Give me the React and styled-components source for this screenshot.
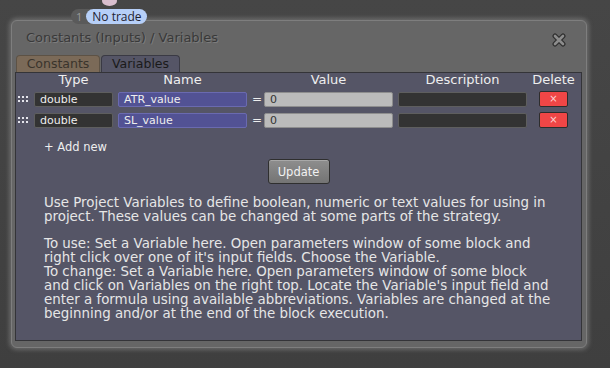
import React from "react";
import styled, { createGlobalStyle } from "styled-components";

const Global = createGlobalStyle`
  html, body { margin: 0; padding: 0; }
  body {
    background: #414141;
    font-family: "DejaVu Sans", "Open Sans", sans-serif;
    width: 610px; height: 368px; overflow: hidden;
  }
`;

const Page = styled.div`
  width: 610px;
  height: 368px;
  background: linear-gradient(#464646, #3f3f3f);
`;

const TopBar = styled.div`
  height: 20px;
  padding-left: 71px;
  padding-top: 6px;
  box-sizing: border-box;
`;

const Badge = styled.div`
  position: relative;
  display: inline-flex;
  align-items: center;
  height: 15px;
`;

const Num = styled.span`
  background: #5a5a5a;
  color: #9a9a9a;
  font-family: "Open Sans", sans-serif;
  font-size: 11px;
  line-height: 15px;
  padding: 0 9px 0 5px;
  border-radius: 8px 0 0 8px;
`;

const Pill = styled.span`
  margin-left: -5px;
  background: #b6cff8;
  color: #1e2230;
  font-family: "Open Sans", sans-serif;
  font-size: 12px;
  line-height: 15px;
  padding: 0 5px 0 6px;
  border-radius: 8px;
`;

const Dot = styled.span`
  position: absolute;
  left: 31px;
  top: -13px;
  width: 15px;
  height: 10px;
  border-radius: 50%;
  background: #d9bfcf;
`;

const Dialog = styled.div`
  margin-left: 11px;
  width: 576px;
  height: 328px;
  box-sizing: border-box;
  background: #666666;
  border: 1px solid #7e7e7e;
  border-radius: 6px;
  box-shadow: 0 0 4px 2px rgba(150, 150, 150, 0.45);
  padding: 0 4px 6px 3px;
  display: flex;
  flex-direction: column;
`;

const TitleBar = styled.div`
  height: 34px;
  display: flex;
  align-items: center;
  justify-content: space-between;
  padding: 0 16px 0 11px;
`;

const Title = styled.div`
  font-size: 13px;
  color: #393939;
  text-shadow: 1px 1px 0 rgba(140, 140, 140, 0.6);
  margin-top: -2px;
`;

const Close = styled.button`
  border: 0;
  background: none;
  padding: 0;
  width: 14px;
  height: 14px;
  display: flex;
  margin-top: 4px;
`;

const Tabs = styled.div`
  display: flex;
  height: 17px;
  padding-left: 1px;
  gap: 1px;
`;

const Tab = styled.div`
  height: 17px;
  box-sizing: border-box;
  width: ${(p) => p.$w}px;
  border-radius: 4px 4px 0 0;
  border: 1px solid ${(p) => (p.$active ? "#3a3a44" : "#5d5245")};
  border-bottom: 0;
  background: ${(p) => (p.$active ? "#555566" : "#7b6a58")};
  color: ${(p) => (p.$active ? "#1a1a1a" : "#3a342c")};
  font-size: 12.5px;
  line-height: 16px;
  text-align: center;
`;

const Panel = styled.div`
  flex: 1;
  background: #555566;
  border: 1px solid #343438;
  padding: 0 0 0 2px;
  display: flex;
  flex-direction: column;
`;

const Grid = styled.div`
  display: grid;
  grid-template-columns: 11px 79px 129px 7px 129px 129px 43px;
  column-gap: 5px;
  row-gap: 5px;
  align-items: center;
`;

const Head = styled.div`
  color: #eeeeee;
  font-size: 13px;
  line-height: 14px;
  text-align: center;
  height: 14px;
`;

const Handle = styled.div`
  display: flex;
  align-items: center;
  height: 14px;
`;

const Field = styled.div`
  height: 15px;
  box-sizing: border-box;
  border-radius: 2px;
  border: 1px solid ${(p) => p.$bd};
  background: ${(p) => p.$bg};
  color: ${(p) => p.$fg || "#eeeeee"};
  font-size: 11px;
  line-height: 13px;
  padding-left: 5px;
`;

const Eq = styled.div`
  color: #eeeeee;
  font-size: 12px;
  line-height: 14px;
  text-align: center;
`;

const DelCell = styled.div`
  display: flex;
  justify-content: center;
`;

const Del = styled.button`
  width: 29px;
  height: 16px;
  box-sizing: border-box;
  background: #f04646;
  border: 1px solid #2d2d2d;
  border-radius: 2px;
  color: #ffd0d0;
  font-size: 10px;
  line-height: 12px;
  padding: 0;
  font-family: "DejaVu Sans", sans-serif;
`;

const AddNew = styled.div`
  color: #eeeeee;
  font-size: 11.5px;
  margin: 11px 0 0 26px;
  line-height: 16px;
`;

const UpdateRow = styled.div`
  display: flex;
  justify-content: center;
  margin-top: 4px;
  padding-right: 2px;
`;

const Update = styled.button`
  width: 62px;
  height: 25px;
  background: linear-gradient(#8e8e8e, #747474);
  border: 1px solid #2f2f2f;
  border-radius: 3px;
  color: #f2f2f2;
  font-size: 11.5px;
  font-family: "DejaVu Sans", sans-serif;
  padding: 0;
  box-shadow: inset 0 1px 0 #a8a8a8;
`;

const Text = styled.p`
  margin: ${(p) => p.$mt}px 0 0 26px;
  color: #e6e6e6;
  font-size: 13.4px;
  line-height: 14px;
  white-space: nowrap;
`;

const rows = [{ name: "ATR_value" }, { name: "SL_value" }];

const Dots = () => (
  <svg width="11" height="6" viewBox="0 0 11 6">
    {[0, 4, 8].map((x) =>
      [0, 4].map((y) => (
        <rect key={`${x}-${y}`} x={x} y={y} width="2" height="2" fill="#e4e4ec" />
      ))
    )}
  </svg>
);

export default function App() {
  return (
    <Page>
      <Global />
      <TopBar>
        <Badge>
          <Dot />
          <Num>1</Num>
          <Pill>No trade</Pill>
        </Badge>
      </TopBar>
      <Dialog>
        <TitleBar>
          <Title>Constants (Inputs) / Variables</Title>
          <Close aria-label="close">
            <svg width="14" height="14" viewBox="0 0 14 14">
              <path d="M3 3 L11 11 M11 3 L3 11" stroke="#2e2e2e" strokeWidth="5" strokeLinecap="round" />
              <path d="M3 3 L11 11 M11 3 L3 11" stroke="#8c8c8c" strokeWidth="2.6" strokeLinecap="round" />
            </svg>
          </Close>
        </TitleBar>
        <Tabs>
          <Tab $w={84}>Constants</Tab>
          <Tab $w={79} $active>Variables</Tab>
        </Tabs>
        <Panel>
          <Grid>
            <span />
            <Head>Type</Head>
            <Head>Name</Head>
            <span />
            <Head>Value</Head>
            <Head>Description</Head>
            <Head>Delete</Head>
          </Grid>
          <Grid style={{ marginTop: 4 }}>
            {rows.map((r) => (
              <React.Fragment key={r.name}>
                <Handle>
                  <Dots />
                </Handle>
                <Field $bg="#333333" $bd="#5e5e5e">double</Field>
                <Field $bg="#525294" $bd="#6a6ab0">{r.name}</Field>
                <Eq>=</Eq>
                <Field $bg="#bbbbbb" $bd="#8e8e8e" $fg="#333333">0</Field>
                <Field $bg="#333333" $bd="#5e5e5e" />
                <DelCell>
                  <Del>×</Del>
                </DelCell>
              </React.Fragment>
            ))}
          </Grid>
          <AddNew>+ Add new</AddNew>
          <UpdateRow>
            <Update>Update</Update>
          </UpdateRow>
          <Text $mt={12}>
            Use Project Variables to define boolean, numeric or text values for using in
            <br />
            project. These values can be changed at some parts of the strategy.
          </Text>
          <Text $mt={13}>
            To use: Set a Variable here. Open parameters window of some block and
            <br />
            right click over one of it's input fields. Choose the Variable.
            <br />
            To change: Set a Variable here. Open parameters window of some block
            <br />
            and click on Variables on the right top. Locate the Variable's input field and
            <br />
            enter a formula using available abbreviations. Variables are changed at the
            <br />
            beginning and/or at the end of the block execution.
          </Text>
        </Panel>
      </Dialog>
    </Page>
  );
}
